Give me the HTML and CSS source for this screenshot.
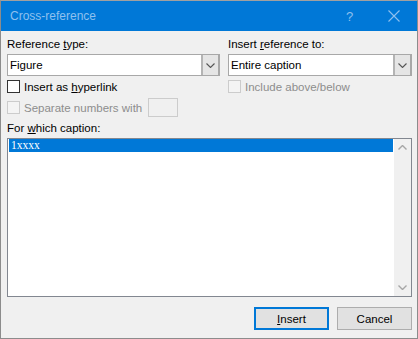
FILE: index.html
```html
<!DOCTYPE html>
<html>
<head>
<meta charset="utf-8">
<link rel="stylesheet" href="styles.css">
</head>
<body>
<div class="window">
  <div class="titlebar">
    <span class="title">Cross-reference</span>
    <span class="help">?</span>
    <span class="close"><svg width="12" height="12" viewBox="0 0 12 12"><path d="M0.5 0.5 L11.5 11.5 M11.5 0.5 L0.5 11.5" stroke="#8fc0ee" stroke-width="1.1" fill="none"/></svg></span>
  </div>
  <div class="content">
    <div class="top">
      <div class="col col-left">
        <div class="label">Reference <u>t</u>ype:</div>
        <div class="combo"><span class="value">Figure</span><span class="drop"><svg width="9" height="5" viewBox="0 0 9 5"><path d="M0.5 0.5 L4.5 4.5 L8.5 0.5" stroke="#555" stroke-width="1.1" fill="none"/></svg></span></div>
        <div class="check"><span class="box"></span><span>Insert as <u>h</u>yperlink</span></div>
        <div class="check disabled sep"><span class="box"></span><span>Separate numbers with</span><span class="textbox"></span></div>
      </div>
      <div class="col col-right">
        <div class="label">Insert <u>r</u>eference to:</div>
        <div class="combo"><span class="value">Entire caption</span><span class="drop"><svg width="9" height="5" viewBox="0 0 9 5"><path d="M0.5 0.5 L4.5 4.5 L8.5 0.5" stroke="#555" stroke-width="1.1" fill="none"/></svg></span></div>
        <div class="check disabled"><span class="box"></span><span>Include above/below</span></div>
      </div>
    </div>
    <div class="label caption-label">For <u>w</u>hich caption:</div>
    <div class="listbox">
      <div class="items"><div class="item selected">1xxxx</div></div>
      <div class="scrollbar">
        <span class="arrow"><svg width="9" height="5" viewBox="0 0 9 5"><path d="M0.5 4.5 L4.5 0.5 L8.5 4.5" stroke="#a6a6a6" stroke-width="1.4" fill="none"/></svg></span>
        <span class="arrow"><svg width="9" height="5" viewBox="0 0 9 5"><path d="M0.5 0.5 L4.5 4.5 L8.5 0.5" stroke="#a6a6a6" stroke-width="1.4" fill="none"/></svg></span>
      </div>
    </div>
    <div class="buttons">
      <div class="btn default"><u>I</u>nsert</div>
      <div class="btn">Cancel</div>
    </div>
  </div>
</div>
</body>
</html>
```
FILE: styles.css
```css
html, body {
  margin: 0;
  padding: 0;
  background: #f0f0f0;
}
body {
  font-family: "Segoe UI", "Liberation Sans", Arial, sans-serif;
  font-size: 11.5px;
  color: #000;
}
.window {
  width: 418px;
  height: 339px;
  box-sizing: border-box;
  border: 1px solid #8c8c8c;
  border-top-color: #a0a0a0;
  background: #f0f0f0;
  display: flex;
  flex-direction: column;
}
.titlebar {
  height: 30px;
  background: #0078d7;
  display: flex;
  align-items: center;
  color: #8fc0ee;
  font-size: 12px;
}
.title {
  margin-left: 9px;
  flex: 1;
}
.help {
  width: 14px;
  margin-right: 28px;
  font-size: 13px;
}
.close {
  width: 12px;
  height: 12px;
  margin-right: 17px;
  display: flex;
}
.content {
  padding: 6px 5px 0 6px;
  display: flex;
  flex-direction: column;
}
.top {
  display: flex;
  gap: 8px;
}
.col {
  display: flex;
  flex-direction: column;
}
.col-left { width: 213px; }
.col-right { width: 184px; }
.label {
  height: 15px;
  line-height: 15px;
  margin-bottom: 2px;
}
.combo {
  height: 22px;
  box-sizing: border-box;
  border: 1px solid #a8a8a8;
  border-right-width: 2px;
  background: #fff;
  display: flex;
  align-items: center;
}
.combo .value {
  flex: 1;
  padding-left: 2px;
}
.combo .drop {
  width: 17px;
  height: 20px;
  box-sizing: border-box;
  background: #e5e5e5;
  border-left: 2px solid #b4b4b4;
  display: flex;
  align-items: center;
  justify-content: center;
}
.check {
  display: flex;
  align-items: center;
  height: 13px;
  margin-top: 4px;
}
.check .box {
  width: 13px;
  height: 13px;
  box-sizing: border-box;
  border: 1px solid #333;
  background: #fff;
  margin-right: 4px;
  flex: none;
}
.check.disabled {
  color: #8d8d8d;
}
.check.disabled .box {
  border-color: #cccccc;
  background: #f4f4f4;
}
.check.sep {
  height: 19px;
  margin-top: 5px;
}
.textbox {
  width: 30px;
  height: 19px;
  box-sizing: border-box;
  border: 1px solid #cccccc;
  background: #f0f0f0;
  margin-left: 6px;
}
.caption-label {
  margin-top: 4px;
}
.listbox {
  height: 159px;
  box-sizing: border-box;
  border: 1px solid #828790;
  background: #fff;
  display: flex;
}
.items {
  flex: 1;
  padding: 0 1px 0 1px;
}
.item {
  height: 13px;
  line-height: 13px;
  font-family: "Liberation Serif", "Times New Roman", serif;
  font-size: 11.5px;
  padding-left: 2px;
}
.item.selected {
  background: #0078d7;
  color: #fff;
}
.scrollbar {
  width: 17px;
  background: #f0f0f0;
  display: flex;
  flex-direction: column;
  justify-content: space-between;
}
.arrow {
  height: 17px;
  display: flex;
  align-items: center;
  justify-content: center;
}
.buttons {
  display: flex;
  justify-content: flex-end;
  gap: 8px;
  margin-top: 10px;
}
.btn {
  width: 75px;
  height: 23px;
  box-sizing: border-box;
  border: 1px solid #adadad;
  background: #e1e1e1;
  display: flex;
  align-items: center;
  justify-content: center;
}
.btn.default {
  border: 2px solid #0078d7;
}
```
